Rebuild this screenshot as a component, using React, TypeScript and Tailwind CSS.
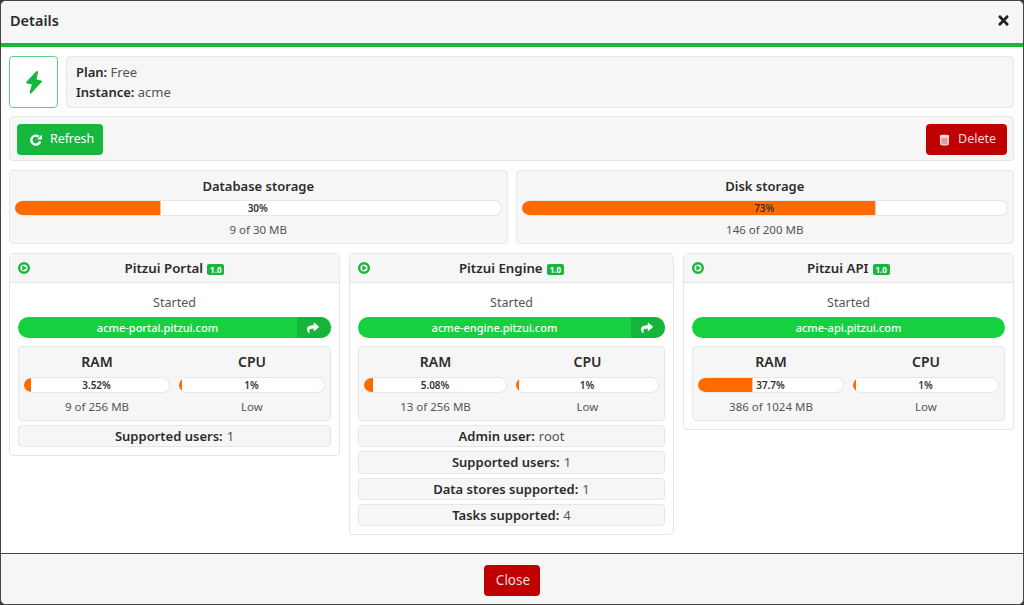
import React from "react";
import { FaTimes, FaShare } from "react-icons/fa";

function Bar({ pct, label }: { pct: number; label: string }) {
  return (
    <div className="relative h-[16px] rounded-full overflow-hidden bg-white border-y border-r border-[#e6e6e6]">
      <div className={`absolute left-0 -top-[1px] -bottom-[1px] bg-[#ff6a00] ${pct > 10 ? "border-r border-[#e0c9b8]" : ""}`} style={{ width: pct > 10 ? `${pct}%` : `calc(${pct}% + 1.5px)` }} />
      <div className="absolute inset-0 flex items-center justify-center text-[10px] font-semibold text-[#333]">{label}</div>
    </div>
  );
}

function Meter({ title, pct, label, sub }: { title: string; pct: number; label: string; sub: string }) {
  return (
    <div className="flex-1 flex flex-col items-stretch text-center min-w-0">
      <div className="text-[14px] leading-[20px] font-semibold text-[#2b2b2b]">{title}</div>
      <div className="mt-[5px]"><Bar pct={pct} label={label} /></div>
      <div className="text-[11.5px] leading-[16px] mt-[6px] text-[#555]">{sub}</div>
    </div>
  );
}

function Row({ k, v }: { k: string; v: string }) {
  return (
    <div className="h-[22.33px] pt-[1px] bg-[#f6f6f6] border border-[#e6e6e6] rounded flex items-center justify-center text-[13px] text-[#555]">
      <b className="font-semibold text-[#2b2b2b] mr-[4px]">{k}</b>{v}
    </div>
  );
}

function PlayIcon() {
  return (
    <svg viewBox="0 0 12 12" className="absolute left-[8px] top-[8px] w-[12px] h-[12px]">
      <circle cx="6" cy="6" r="4.8" fill="none" stroke="#16b73c" strokeWidth="2.4" />
      <path d="M4.4 3.3 L8.8 6 L4.4 8.7 Z" fill="#16b73c" />
    </svg>
  );
}

function Service({ name, url, link, ram, ramLabel, ramSub, rows }: { name: string; url: string; link: boolean; ram: number; ramLabel: string; ramSub: string; rows: [string, string][] }) {
  return (
    <div className="border border-[#e6e6e6] rounded bg-white">
      <div className="relative h-[29px] pt-[1px] bg-[#f6f6f6] border-b border-[#e6e6e6] flex items-center justify-center text-[13.3px] font-semibold text-[#2b2b2b]">
        <PlayIcon />
        <span>{name}</span>
        <span className="ml-[4px] mt-[2px] px-[3px] h-[11px] leading-[11px] rounded-[2px] bg-[#16b73c] text-white text-[8px] font-bold">1.0</span>
      </div>
      <div className="px-[8px] pt-[10px] pb-[8px] flex flex-col">
        <div className="text-center text-[12.5px] leading-[20px] text-[#555]">Started</div>
        <div className="mt-[4px] h-[21px] rounded-full bg-[#16d03f] flex overflow-hidden text-white text-[11px] font-medium">
          <div className="flex-1 flex items-center justify-center pt-[1px]">{url}</div>
          {link && <div className="w-[34px] bg-[#14b53a] flex items-center justify-center pr-[2px]"><FaShare className="w-[12px] h-[12px]" /></div>}
        </div>
        <div className="mt-[8px] h-[75px] bg-[#f6f6f6] border border-[#e6e6e6] rounded flex gap-[9px] px-[5px] pt-[5px]">
          <Meter title="RAM" pct={ram} label={ramLabel} sub={ramSub} />
          <Meter title="CPU" pct={1} label="1%" sub="Low" />
        </div>
        {rows.length > 0 && (
          <div className="mt-[4px] flex flex-col gap-[4px]">
            {rows.map(([k, v]) => <Row key={k} k={k} v={v} />)}
          </div>
        )}
      </div>
    </div>
  );
}

export default function App() {
  return (
    <div className="w-[1024px] h-[605px] overflow-hidden bg-[#3a3a3a]" style={{ fontFamily: '"Noto Sans", sans-serif' }}>
      <div className="w-full h-full flex flex-col bg-white border border-[#444] rounded-[6px] overflow-hidden">
        <div className="h-[46px] shrink-0 bg-[#f6f6f6] border-b-[4px] border-[#16b73c] flex items-center justify-between pl-[9px] pr-[12px] pb-[3px]">
          <span className="text-[14.5px] font-semibold text-[#2b2b2b]">Details</span>
          <FaTimes className="w-[15px] h-[15px] text-[#222]" />
        </div>
        <div className="flex-1 min-h-0 pl-[8px] pr-[9px] pt-[9px] flex flex-col">
          <div className="flex gap-[8px] h-[52px]">
            <div className="w-[49px] border border-[#5fd07a] rounded flex items-center justify-center bg-white">
              <svg viewBox="0 0 18 24" className="w-[18px] h-[24px]">
                <path d="M12 2 L2.2 12.4 L8 13.6 L5.6 22.6 L16 11.4 L10.4 10.2 Z" fill="#16b73c" stroke="#16b73c" strokeWidth="2" strokeLinejoin="round" />
              </svg>
            </div>
            <div className="flex-1 bg-[#f6f6f6] border border-[#e6e6e6] rounded flex flex-col justify-center pl-[9px] text-[13px] leading-[20px] text-[#555]">
              <div><b className="font-semibold text-[#2b2b2b]">Plan:</b> Free</div>
              <div><b className="font-semibold text-[#2b2b2b]">Instance:</b> acme</div>
            </div>
          </div>
          <div className="mt-[8px] h-[45px] bg-[#f6f6f6] border border-[#e6e6e6] rounded flex items-center justify-between pl-[7px] pr-[6px]">
            <button className="mt-[1px] h-[31px] w-[86px] rounded bg-[#16b73c] text-white text-[12.5px] tracking-[-0.1px] flex items-center pl-[13px] pt-[1px] gap-[8px]">
              <svg viewBox="0 0 12 12" className="w-[12px] h-[12px] shrink-0">
                <path d="M10.2 7.4 A4.5 4.5 0 1 1 8.7 2.6" fill="none" stroke="white" strokeWidth="2.4" />
                <path d="M6.8 5.6 L12 5.6 L12 .4 Z" fill="white" />
              </svg>
              Refresh
            </button>
            <button className="mt-[1px] h-[31px] w-[81px] rounded bg-[#c00000] text-[#f3dcdc] text-[12.5px] flex items-center pl-[13px] pt-[1px] gap-[8px]">
              <svg viewBox="0 0 11 12" className="w-[11px] h-[12px] shrink-0">
                <path d="M.8 1.6 C.8 .4 10.2 .4 10.2 1.6 L10.2 3.2 L.8 3.2 Z" fill="#f3dcdc" />
                <path d="M1.6 3.4 L9.4 3.4 L9.2 10 C9.1 11.2 1.9 11.2 1.8 10 Z" fill="#e49a9a" stroke="#f3dcdc" strokeWidth="1.4" />
              </svg>
              Delete
            </button>
          </div>
          <div className="mt-[9px] grid grid-cols-2 gap-[8px] h-[74px]">
            {[
              ["Database storage", 30, "30%", "9 of 30 MB"],
              ["Disk storage", 73, "73%", "146 of 200 MB"],
            ].map(([t, p, l, s]) => (
              <div key={t as string} className="bg-[#f6f6f6] border border-[#e6e6e6] rounded px-[5px] pt-[5px] text-center">
                <div className="text-[13px] leading-[20px] font-semibold text-[#2b2b2b]">{t}</div>
                <div className="mt-[4px]"><Bar pct={p as number} label={l as string} /></div>
                <div className="text-[11.5px] leading-[16px] mt-[6px] text-[#555]">{s}</div>
              </div>
            ))}
          </div>
          <div className="mt-[9px] grid grid-cols-[331px_325px_331px] gap-[9px] items-start">
            <Service name="Pitzui Portal" url="acme-portal.pitzui.com" link ram={3.52} ramLabel="3.52%" ramSub="9 of 256 MB" rows={[["Supported users:", "1"]]} />
            <Service name="Pitzui Engine" url="acme-engine.pitzui.com" link ram={5.08} ramLabel="5.08%" ramSub="13 of 256 MB" rows={[["Admin user:", "root"], ["Supported users:", "1"], ["Data stores supported:", "1"], ["Tasks supported:", "4"]]} />
            <Service name="Pitzui API" url="acme-api.pitzui.com" link={false} ram={37.7} ramLabel="37.7%" ramSub="386 of 1024 MB" rows={[]} />
          </div>
        </div>
        <div className="h-[51px] shrink-0 bg-[#f6f6f6] border-t border-[#444] flex items-center justify-center pt-[2px]">
          <button className="w-[56px] h-[31px] pl-[2px] pt-[1px] rounded bg-[#c00000] text-[#f3dcdc] text-[13.5px]">Close</button>
        </div>
      </div>
    </div>
  );
}
